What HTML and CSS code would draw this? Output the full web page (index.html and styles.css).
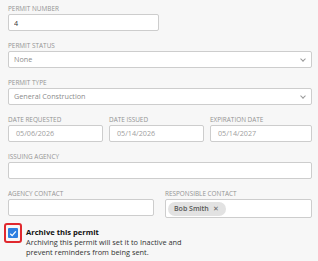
FILE: index.html
```html
<!DOCTYPE html>
<html lang="en">
<head>
    <meta charset="UTF-8">
    <title>Permit</title>
    <link rel="stylesheet" href="styles.css">
</head>
<body>
    <form class="permit">
        <div class="field">
            <label class="lbl">Permit Number</label>
            <input class="inp short" type="text" value="4">
        </div>
        <div class="field">
            <label class="lbl">Permit Status</label>
            <div class="sel placeholder">None<span class="chev"></span></div>
        </div>
        <div class="field">
            <label class="lbl">Permit Type</label>
            <div class="sel">General Construction<span class="chev"></span></div>
        </div>
        <div class="field dates">
            <div>
                <label class="lbl">Date Requested</label>
                <div class="inp dis">05/06/2026</div>
            </div>
            <div>
                <label class="lbl">Date Issued</label>
                <div class="inp dis">05/14/2026</div>
            </div>
            <div>
                <label class="lbl">Expiration Date</label>
                <div class="inp dis">05/14/2027</div>
            </div>
        </div>
        <div class="field">
            <label class="lbl">Issuing Agency</label>
            <div class="inp"></div>
        </div>
        <div class="field pair">
            <div>
                <label class="lbl">Agency Contact</label>
                <div class="inp"></div>
            </div>
            <div>
                <label class="lbl">Responsible Contact</label>
                <div class="inp tags"><span class="tag">Bob Smith <span class="x">&#x2715;</span></span></div>
            </div>
        </div>
        <div class="archive">
            <div class="cbwrap"><span class="cb">
                <svg width="11" height="11" viewBox="0 0 11 11"><path d="M2.5 5.8 L4.6 7.8 L8.6 3.2" fill="none" stroke="#fff" stroke-width="1.4"/></svg>
            </span></div>
            <div class="archtext">
                <div class="archtitle">Archive this permit</div>
                <div class="archdesc">Archiving this permit will set it to Inactive and prevent reminders from being sent.</div>
            </div>
        </div>
    </form>
</body>
</html>
```

FILE: styles.css
```css
body {
    margin: 0;
    background-color: #f7f7f7;
    font-family: "Open Sans", "Noto Sans", sans-serif;
    color: #333;
}
.permit {
    padding: 5px 6px 0 8px;
}
.field {
    margin-bottom: 11px;
}
.lbl {
    display: block;
    font-size: 6.4px;
    line-height: 8px;
    height: 8px;
    margin-bottom: 1px;
    text-transform: uppercase;
    color: #939393;
    white-space: nowrap;
}
.inp, .sel {
    box-sizing: border-box;
    height: 17px;
    border: 1px solid #cdcdcd;
    border-radius: 2px;
    background-color: #fff;
    font-family: inherit;
    font-size: 7.2px;
    line-height: 15px;
    padding: 0 5px;
    color: #333;
    display: block;
    width: 100%;
}
.inp.short {
    width: 151px;
}
.inp.dis {
    color: #a0a0a0;
    padding-left: 7px;
}
.sel {
    display: flex;
    justify-content: space-between;
    align-items: center;
    color: #8c8c8c;
}
.chev {
    width: 3px;
    height: 3px;
    border-right: 1px solid #999;
    border-bottom: 1px solid #999;
    transform: rotate(45deg);
    margin: -2px 1px 0 0;
}
.dates {
    display: grid;
    grid-template-columns: 95px 95px 1fr;
    gap: 6px;
}
.pair {
    display: grid;
    grid-template-columns: 146px 1fr;
    gap: 11px;
}
.tags {
    height: 19px;
    padding: 1px 2px;
}
.tag {
    display: inline-flex;
    align-items: center;
    height: 14px;
    padding: 0 7px 0 6px;
    border-radius: 7px;
    background-color: #e2e2e2;
    font-weight: 600;
    font-size: 7px;
    color: #555;
    gap: 4px;
}
.tag .x {
    font-weight: 400;
    font-size: 7px;
    color: #666;
}
.archive {
    display: flex;
    margin-top: -6px;
    margin-left: -4px;
}
.cbwrap {
    box-sizing: border-box;
    width: 18px;
    height: 20px;
    border: 2px solid #e0282e;
    border-radius: 3px;
    display: flex;
    align-items: center;
    justify-content: center;
    flex-shrink: 0;
}
.cb {
    width: 10px;
    height: 10px;
    border-radius: 1px;
    background-color: #2d7fe0;
    display: flex;
    align-items: center;
    justify-content: center;
}
.archtext {
    padding-left: 4px;
    padding-top: 4px;
}
.archtitle {
    font-weight: 700;
    font-size: 7.6px;
    line-height: 10px;
    color: #111;
}
.archdesc {
    font-size: 7.4px;
    line-height: 10px;
    color: #333;
    width: 160px;
}
```
